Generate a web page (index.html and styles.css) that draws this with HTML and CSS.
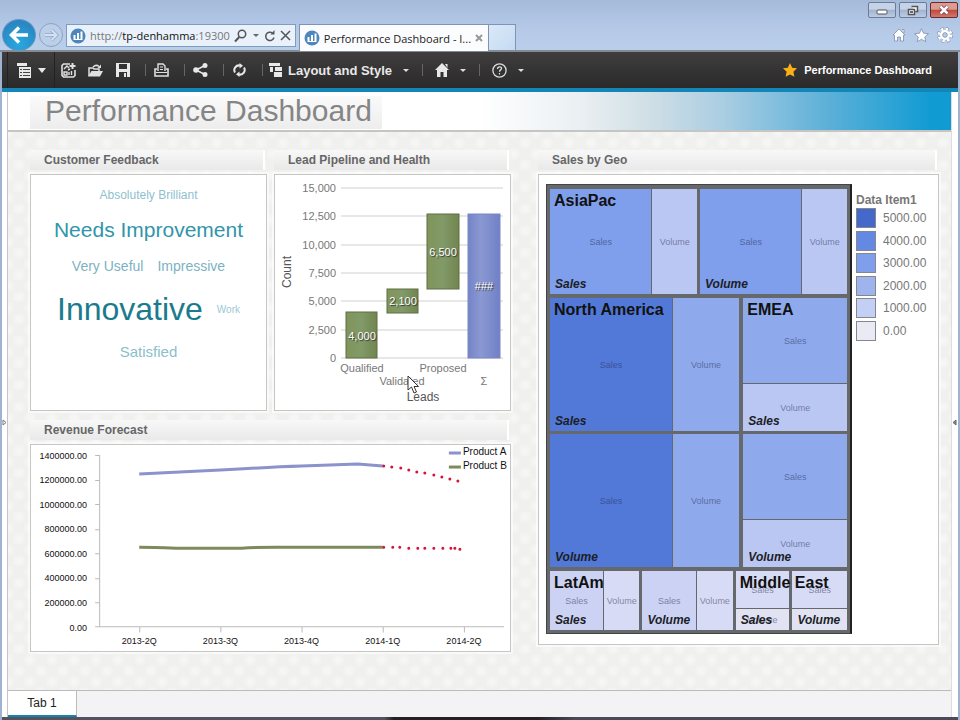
FILE: index.html
```html
<!DOCTYPE html>
<html lang="en">
<head>
    <meta charset="UTF-8">
    <meta name="viewport" content="width=device-width, initial-scale=1.0">
    <title>Performance Dashboard</title>
    <link rel="stylesheet" href="styles.css">
</head>
<body>
    <!-- Browser frame -->
    <header class="browser">
        <div class="window-buttons">
            <button class="win-btn" aria-label="Minimize"><svg width="12" height="10"><rect x="1" y="5" width="10" height="4" rx="1" fill="#fff" stroke="#555"/></svg></button>
            <button class="win-btn" aria-label="Restore"><svg width="12" height="11"><path d="M4.500 1.500h6v5h-2M1.500 4.500h6v5h-6z" fill="#fff" stroke="#555" stroke-width="1.500"/><rect x="3" y="6" width="3" height="2" fill="#667"/></svg></button>
            <button class="win-btn close" aria-label="Close"><svg width="12" height="10"><path d="M2.500 1.500l7 7M9.500 1.500l-7 7" stroke="#734" stroke-width="4"/><path d="M2.500 1.500l7 7M9.500 1.500l-7 7" stroke="#fff" stroke-width="2.500"/></svg></button>
        </div>
        <div class="nav">
            <button class="back" aria-label="Back"><svg width="20" height="18" viewBox="0 0 20 18"><path d="M19 9H3M10 1.500L2.500 9l7.500 7.500" fill="none" stroke="#fff" stroke-width="3.500"/></svg></button>
            <button class="forward" aria-label="Forward"><svg width="15" height="14" viewBox="0 0 15 14"><path d="M1 7h11M7.500 2l5 5-5 5" fill="none" stroke="#8fa8c6" stroke-width="3.500"/><path d="M1 7h11M7.500 2l5 5-5 5" fill="none" stroke="#d3e1f3" stroke-width="2"/></svg></button>
            <div class="address">
                <svg width="16" height="16" viewBox="0 0 16 16"><circle cx="8" cy="8" r="7.500" fill="#4c86bb"/><path d="M4.500 7v5M8 5v7M11.500 3.500V12" stroke="#fff" stroke-width="2"/><path d="M4 11.500h8" stroke="#fff"/></svg>
                <span class="url">http://<b>tp-denhamma</b>:19300</span>
                <button class="plain" aria-label="Search"><svg width="14" height="14" viewBox="0 0 14 14"><circle cx="8" cy="5" r="3.700" fill="none" stroke="#555" stroke-width="1.500"/><path d="M5.300 8L1 12.500" stroke="#555" stroke-width="2"/></svg></button>
                <button class="plain" aria-label="Show addresses"><svg width="8" height="5"><path d="M1 1h6L4 4z" fill="#666"/></svg></button>
                <button class="plain" aria-label="Refresh"><svg width="12" height="12" viewBox="0 0 12 12"><path d="M10 7.500A4.200 4.200 0 1 1 8.500 3" fill="none" stroke="#555" stroke-width="1.500"/><path d="M6.500 4.500h4V0z" fill="#555"/></svg></button>
                <button class="plain" aria-label="Stop"><svg width="11" height="11"><path d="M1 1l9 9M10 1l-9 9" stroke="#555" stroke-width="1.500"/></svg></button>
            </div>
            <div class="page-tab">
                <svg width="16" height="16" viewBox="0 0 16 16"><circle cx="8" cy="8" r="7.500" fill="#4c86bb"/><path d="M4.500 7v5M8 5v7M11.500 3.500V12" stroke="#fff" stroke-width="2"/><path d="M4 11.500h8" stroke="#fff"/></svg>
                <span class="page-name">Performance Dashboard - I...</span>
                <button class="plain" aria-label="Close tab"><svg width="8" height="8"><path d="M1 1l6 6M7 1L1 7" stroke="#999" stroke-width="2"/></svg></button>
            </div>
            <button class="new-tab" aria-label="New tab"></button>
            <div class="browser-tools">
                <button class="plain" aria-label="Home"><svg width="14" height="14" viewBox="0 0 14 14"><path d="M7 1l6 6h-1.500v6H8.500V9h-3v4H2.500V7H1zM10 1.500h2V5" fill="#fff" stroke="#7d8ea8" stroke-width=".8"/></svg></button>
                <button class="plain" aria-label="Favorites"><svg width="15" height="14" viewBox="0 0 15 14"><path d="M7.500.7l2 4.500 4.900.5-3.700 3.300 1.100 4.700-4.300-2.400-4.300 2.400 1.100-4.700L.6 5.700l4.900-.5z" fill="#fff" stroke="#7d8ea8" stroke-width=".8"/></svg></button>
                <button class="plain" aria-label="Tools"><svg width="16" height="16" viewBox="0 0 16 16"><circle cx="8" cy="8" r="6" fill="none" stroke="#7d8ea8" stroke-width="4" stroke-dasharray="2.800 1.900"/><circle cx="8" cy="8" r="6" fill="none" stroke="#fff" stroke-width="2.800" stroke-dasharray="2.400 2.300"/><circle cx="8" cy="8" r="3.700" fill="none" stroke="#fff" stroke-width="2.500"/><circle cx="8" cy="8" r="2.300" fill="none" stroke="#7d8ea8" stroke-width=".8"/></svg></button>
            </div>
        </div>
    </header>

    <div class="app">
        <!-- Toolbar -->
        <div class="toolbar">
            <button class="tool menu" aria-label="Menu">
                <svg width="16" height="15" viewBox="0 0 16 15"><path d="M1 0h10v3H1zM3 4h12v11H3z" fill="#e8e8e8"/><path d="M4 6.500h2M7 6.500h7M4 9.500h2M7 9.500h7M4 12.500h2M7 12.500h7" stroke="#444"/></svg>
                <svg width="8" height="5"><path d="M0 0h8L4 5z" fill="#e8e8e8"/></svg>
            </button>
            <button class="tool" aria-label="New"><svg width="15" height="15" viewBox="0 0 15 15"><path d="M9 1H2.500L1 2.500v10L2.500 14h10l1.500-1.500V7" fill="none" stroke="#e0e0e0" stroke-width="1.600"/><path d="M3 6l3-3 2 2M3 9h3v3H3zM8 12V9M10.500 12V8M7 7l2-1" fill="none" stroke="#e0e0e0" stroke-width="1.400"/><path d="M11.500 0v6M8.500 3h6" stroke="#e0e0e0" stroke-width="2"/></svg></button>
            <button class="tool" aria-label="Open"><svg width="15" height="13" viewBox="0 0 15 13"><path d="M1 12V4h4l1 1h5v2" fill="none" stroke="#e0e0e0" stroke-width="1.500"/><path d="M0 12.500L3.500 7H15l-3 5.500z" fill="#e0e0e0"/><path d="M5 3q3-3 6-.5" fill="none" stroke="#e0e0e0" stroke-width="1.500"/><path d="M9.500 4H13V.5z" fill="#e0e0e0"/></svg></button>
            <button class="tool" aria-label="Save"><svg width="14" height="14" viewBox="0 0 14 14"><path d="M0 0h14v14H0z" fill="#e8e8e8"/><path d="M3 1h8v5H3zM3 9h8v5H3z" fill="#333"/><path d="M8 10h2v4H8z" fill="#e8e8e8"/></svg></button>
            <span class="sep"></span>
            <button class="tool" aria-label="Print"><svg width="15" height="14" viewBox="0 0 15 14"><path d="M4 8V1h5l2 2v5" fill="none" stroke="#e0e0e0" stroke-width="1.400"/><path d="M3 6H1v7h13V6h-2" fill="none" stroke="#e0e0e0" stroke-width="1.600"/><path d="M2 9.500h11M6 4h3M6 6.500h3" stroke="#e0e0e0"/></svg></button>
            <span class="sep"></span>
            <button class="tool" aria-label="Share"><svg width="15" height="14" viewBox="0 0 15 14"><path d="M12 2.500L3 7l9 4.500" fill="none" stroke="#e8e8e8" stroke-width="1.600"/><circle cx="12" cy="2.500" r="2.500" fill="#e8e8e8"/><circle cx="3" cy="7" r="2.800" fill="#e8e8e8"/><circle cx="12" cy="11.500" r="2.500" fill="#e8e8e8"/></svg></button>
            <span class="sep"></span>
            <button class="tool" aria-label="Refresh"><svg width="13" height="14" viewBox="0 0 13 14"><path d="M2 9.500A4.700 4.700 0 0 1 7 2.500M11 4.500a4.700 4.700 0 0 1-5 7" fill="none" stroke="#e8e8e8" stroke-width="2"/><path d="M6.500 0v5.500L10 2.700zM6.500 14V8.500L3 11.300z" fill="#e8e8e8"/></svg></button>
            <span class="sep"></span>
            <button class="tool layout">
                <svg width="14" height="14" viewBox="0 0 14 14"><path d="M0 0h11v3H0zM1 4h3v5H1zM6 4h7v4H6zM5 9h8v5H5z" fill="#e8e8e8"/><path d="M4 4.500h2M5 8.500h6" stroke="#333"/></svg>
                Layout and Style
                <svg class="caret" width="6" height="3"><path d="M0 0h6L3 3z" fill="#ddd"/></svg>
            </button>
            <span class="sep"></span>
            <button class="tool drop" aria-label="Home">
                <svg width="14" height="14" viewBox="0 0 14 14"><path d="M7 0l7 7h-2v7H8.500V9h-3v5H2V7H0zM10 1h2.500v4z" fill="#e8e8e8"/></svg>
                <svg class="caret" width="6" height="3"><path d="M0 0h6L3 3z" fill="#ddd"/></svg>
            </button>
            <span class="sep"></span>
            <button class="tool drop" aria-label="Help">
                <svg width="15" height="15" viewBox="0 0 15 15"><circle cx="7.500" cy="7.500" r="6.600" fill="none" stroke="#ddd" stroke-width="1.300"/><path d="M5.500 6c0-3 4.300-2.700 4-.3-.2 1.300-2 1.200-2 3M7.500 10v1.500" fill="none" stroke="#ddd" stroke-width="1.300"/></svg>
                <svg class="caret" width="6" height="3"><path d="M0 0h6L3 3z" fill="#ddd"/></svg>
            </button>
            <div class="report-name">
                <svg width="14" height="14" viewBox="0 0 14 14"><path d="M7 0l2.200 4.700 4.800.6-3.600 3.400 1 5.100L7 11.400l-4.400 2.400 1-5.100L0 5.300l4.800-.6z" fill="#fbb017"/></svg>
                <span>Performance Dashboard</span>
            </div>
        </div>

        <div class="workspace">
            <button class="gutter" aria-label="Show left pane"><svg width="5" height="7"><path d="M1 1l3 2.500L1 6z" fill="#fff" stroke="#777"/></svg></button>
            <main class="report">
                <div class="banner"><h1>Performance Dashboard</h1></div>
                <div class="dashboard">
                    <div class="left">
                        <section class="panel">
                            <h2>Customer Feedback</h2>
                            <div class="box cloud">
                                <p class="line-1"><span class="s12">Absolutely Brilliant</span></p>
                                <p class="line-2"><span class="s21">Needs Improvement</span></p>
                                <p class="line-3"><span class="s14">Very Useful</span><span class="s14">Impressive</span></p>
                                <p class="line-4"><span class="s32">Innovative</span><span class="s10">Work</span></p>
                                <p class="line-5"><span class="s15">Satisfied</span></p>
                            </div>
                        </section>

                        <section class="panel">
                            <h2>Lead Pipeline and Health</h2>
                            <div class="box pipeline">
                                <svg class="chart" viewBox="0 0 235 235">
                                    <defs>
                                        <linearGradient id="green"><stop offset="0" stop-color="#81955a"/><stop offset=".5" stop-color="#819a68"/><stop offset="1" stop-color="#71854f"/></linearGradient>
                                        <linearGradient id="blue"><stop offset="0" stop-color="#7483c6"/><stop offset=".4" stop-color="#8a99d2"/><stop offset="1" stop-color="#7180c6"/></linearGradient>
                                    </defs>
                                    <path class="grid" d="M66 13h162M66 41h162M66 70h162M66 98h162M66 126h162M66 155h162M66 183h162"/>
                                    <g class="values">
                                        <text x="61" y="17">15,000</text>
                                        <text x="61" y="45">12,500</text>
                                        <text x="61" y="74">10,000</text>
                                        <text x="61" y="102">7,500</text>
                                        <text x="61" y="130">5,000</text>
                                        <text x="61" y="159">2,500</text>
                                        <text x="61" y="187">0</text>
                                    </g>
                                    <g class="bars">
                                        <rect x="71" y="137" width="31" height="46"/>
                                        <rect x="112" y="114" width="31" height="24"/>
                                        <rect x="152" y="39" width="32" height="75"/>
                                        <rect class="total" x="193" y="39" width="32" height="144"/>
                                    </g>
                                    <g class="bar-labels">
                                        <text x="87" y="165">4,000</text>
                                        <text x="128" y="130">2,100</text>
                                        <text x="168" y="81">6,500</text>
                                        <text x="209" y="115">###</text>
                                    </g>
                                    <g class="categories">
                                        <text x="87" y="197">Qualified</text>
                                        <text x="127" y="210">Validated</text>
                                        <text x="168" y="197">Proposed</text>
                                        <text x="209" y="210">Σ</text>
                                        <text class="axis-title" x="148" y="226">Leads</text>
                                        <text class="axis-title" transform="translate(16 97) rotate(-90)">Count</text>
                                    </g>
                                </svg>
                                <svg class="cursor" width="12" height="20" viewBox="0 0 12 20"><path d="M1 1v14l3.500-3 2.500 6 2.500-1L7 11.500h4.500z" fill="#fff" stroke="#333"/></svg>
                            </div>
                        </section>

                        <section class="panel revenue">
                            <h2>Revenue Forecast</h2>
                            <div class="box">
                                <svg class="chart" viewBox="0 0 478 206">
                                    <path class="axis" d="M68.500 10v171.500H472M64 10.500h4M64 35.500h4M64 59.500h4M64 84.500h4M64 108.500h4M64 133.500h4M64 157.500h4M64 181.500h4M108.500 182v5M189.500 182v5M270.500 182v5M351.500 182v5M432.500 182v5"/>
                                    <g class="amounts">
                                        <text x="56" y="14">1400000.00</text>
                                        <text x="56" y="38">1200000.00</text>
                                        <text x="56" y="63">1000000.00</text>
                                        <text x="56" y="87">800000.00</text>
                                        <text x="56" y="112">600000.00</text>
                                        <text x="56" y="136">400000.00</text>
                                        <text x="56" y="161">200000.00</text>
                                        <text x="56" y="186">0.00</text>
                                    </g>
                                    <g class="quarters">
                                        <text x="108" y="199">2013-2Q</text>
                                        <text x="189" y="199">2013-3Q</text>
                                        <text x="270" y="199">2013-4Q</text>
                                        <text x="351" y="199">2014-1Q</text>
                                        <text x="432" y="199">2014-2Q</text>
                                    </g>
                                    <path class="series-a" d="M108 29Q150 27 189 25 240 22 270 21T326 19L351 21"/>
                                    <path class="series-b" d="M108 102Q120 102 145 103H210Q225 102 245 102H351"/>
                                    <path class="forecast" d="M352 21h0M360 22h0M369 23h0M377 25h0M385 27h0M393 28h0M402 30h0M410 32h0M418 34h0M426 36h0M352 102h0M361 102h0M368 102h0M377 103h0M386 103h0M393 103h0M402 103h0M411 103h0M419 103h0M423 103h0M428 104h0"/>
                                    <path class="series-a" d="M417 8h12"/>
                                    <path class="series-b" d="M417 22h12"/>
                                    <text class="series-name" x="431" y="10">Product A</text>
                                    <text class="series-name" x="431" y="24">Product B</text>
                                </svg>
                            </div>
                        </section>
                    </div>

                    <section class="panel geo">
                        <h2>Sales by Geo</h2>
                        <div class="box geo-box">
                            <div class="treemap">
                                <div class="asia">
                                    <div class="node">
                                        <div class="cell c3">Sales</div><div class="cell c1">Volume</div>
                                        <h3>AsiaPac</h3><em>Sales</em>
                                    </div>
                                    <div class="node">
                                        <div class="cell c3">Sales</div><div class="cell c1">Volume</div>
                                        <em>Volume</em>
                                    </div>
                                </div>
                                <div class="middle">
                                    <div class="node america">
                                        <div class="cell c4">Sales</div><div class="cell c2">Volume</div>
                                        <h3>North America</h3><em>Sales</em>
                                    </div>
                                    <div class="node stacked">
                                        <div class="cell c2">Sales</div><div class="cell c1">Volume</div>
                                        <h3>EMEA</h3><em>Sales</em>
                                    </div>
                                    <div class="node america">
                                        <div class="cell c4">Sales</div><div class="cell c2">Volume</div>
                                        <em>Volume</em>
                                    </div>
                                    <div class="node stacked">
                                        <div class="cell c2">Sales</div><div class="cell c1">Volume</div>
                                        <em>Volume</em>
                                    </div>
                                </div>
                                <div class="small">
                                    <div class="node latam">
                                        <div class="cell c05">Sales</div><div class="cell c0">Volume</div>
                                        <h3>LatAm</h3><em>Sales</em>
                                    </div>
                                    <div class="node latam">
                                        <div class="cell c05">Sales</div><div class="cell c0">Volume</div>
                                        <em>Volume</em>
                                    </div>
                                    <div class="node stacked">
                                        <div class="cell c0">Sales</div><div class="cell c00">Volume</div>
                                        <h3>Middle East</h3><em>Sales</em>
                                    </div>
                                    <div class="node stacked">
                                        <div class="cell c0">Sales</div><div class="cell c00"></div>
                                        <em>Volume</em>
                                    </div>
                                </div>
                            </div>
                            <div class="legend">
                                <h4>Data Item1</h4>
                                <ul>
                                    <li><i class="k5"></i>5000.00</li>
                                    <li><i class="k4"></i>4000.00</li>
                                    <li><i class="k3"></i>3000.00</li>
                                    <li><i class="k2"></i>2000.00</li>
                                    <li><i class="k1"></i>1000.00</li>
                                    <li><i class="k0"></i>0.00</li>
                                </ul>
                            </div>
                        </div>
                    </section>
                </div>
                <nav class="tabs"><button class="tab">Tab 1</button></nav>
            </main>
            <button class="gutter right" aria-label="Show right pane"><svg width="5" height="7"><path d="M4 1L1 3.500 4 6z" fill="#888" stroke="#667"/></svg></button>
        </div>
    </div>
</body>
</html>
```

FILE: styles.css
```css
* {
    box-sizing: border-box;
}

body {
    font-family: "Liberation Sans", Arial, sans-serif;
    font-size: 12px;
    margin: 0;
    min-height: 100vh;
    display: flex;
    flex-direction: column;
    background: #9fb3d0;
}

h1, h2, h3, h4, p, ul {
    margin: 0;
    padding: 0;
}

button {
    font-family: inherit;
    padding: 0;
    margin: 0;
    border: none;
    background: none;
    cursor: pointer;
}

svg {
    display: block;
    flex: none;
}

/* browser frame */
.browser {
    height: 52px;
    background: linear-gradient(#a5b9d9, #b6cae8 60%, #b9cfea);
    border-bottom: 2px solid #858b93;
}

.window-buttons {
    height: 19px;
    display: flex;
    justify-content: flex-end;
    gap: 3px;
    padding: 2px 2px 0 0;
}

.win-btn {
    width: 28px;
    height: 16px;
    display: flex;
    align-items: center;
    justify-content: center;
    border: 1px solid #6c7c98;
    border-radius: 2px;
    background: linear-gradient(#c5d3e9 45%, #a1b3d0 50%, #bccbe2);
}

.win-btn.close {
    border-color: #6b2b2c;
    background: linear-gradient(#dd9c92 45%, #c0483b 50%, #d0796b);
}

.nav {
    display: flex;
    align-items: flex-start;
    height: 31px;
}

.back {
    width: 34px;
    height: 32px;
    margin-left: 2px;
    border-radius: 50%;
    border: 1px solid #6197c3;
    background: radial-gradient(circle at 50% 80%, #27a9e0, #2b86c2 75%);
    display: flex;
    align-items: center;
    justify-content: center;
}

.forward {
    width: 24px;
    height: 24px;
    margin: 4px 3px 0;
    border-radius: 50%;
    border: 1px solid #8ca2c2;
    background: #bccfe8;
    display: flex;
    align-items: center;
    justify-content: center;
}

.address {
    flex: 0 0 227px;
    height: 23px;
    margin-top: 5px;
    padding: 0 4px 0 3px;
    display: flex;
    align-items: center;
    gap: 4px;
    border: 1px solid #7f9cc0;
    background: #e9f1fb;
}

.url {
    flex: 1;
    min-width: 0;
    font-family: "Open Sans", sans-serif;
    font-size: 11px;
    color: #777;
    white-space: nowrap;
}

.url b {
    font-weight: normal;
    color: #111;
}

.page-tab {
    flex: 0 0 187px;
    height: 27px;
    margin: 5px 0 0 3px;
    padding: 0 5px 0 4px;
    display: flex;
    align-items: center;
    gap: 4px;
    border: 1px solid #7f94b4;
    border-bottom: none;
    background: #fbfcfe;
}

.page-name {
    flex: 1;
    min-width: 0;
    font-family: "Open Sans", sans-serif;
    font-size: 11px;
    color: #222;
    white-space: nowrap;
}

.new-tab {
    width: 27px;
    height: 26px;
    margin-top: 5px;
    border: 1px solid #7f94b4;
    border-width: 1px 1px 0 0;
    background: linear-gradient(135deg, #dbe9f8, #c4daf2);
}

.browser-tools {
    margin-left: auto;
    padding: 8px 7px 0 0;
    display: flex;
    gap: 8px;
    align-items: center;
}

/* application */
.app {
    flex: 1;
    display: flex;
    flex-direction: column;
    margin: 0 2px;
    padding-bottom: 3px;
    background: linear-gradient(to right, #55515e 40%, #242026 41%, #242026 56%, #4d4a57 60%);
}

.toolbar {
    height: 40px;
    display: flex;
    align-items: center;
    padding: 0 26px 0 5px;
    background: linear-gradient(#3f3d3d, #2b2a2a);
    border-bottom: 4px solid #1385b6;
}

.tool {
    width: 27px;
    height: 36px;
    display: flex;
    align-items: center;
    justify-content: center;
    color: #e8e8e8;
    font-weight: bold;
    font-size: 13px;
}

.tool.menu {
    width: 48px;
    gap: 6px;
    border: 1px solid #222;
    border-width: 0 1px;
}

.tool.layout {
    width: auto;
    gap: 5px;
    padding: 0 4px;
}

.tool.drop {
    width: auto;
    gap: 5px;
    padding: 0 4px 0 10px;
}

.caret {
    margin-left: 6px;
}

.sep {
    width: 12px;
    height: 12px;
    border-right: 1px solid #666;
    margin-right: 2px;
    margin-left: -2px;
}

.report-name {
    margin-left: auto;
    display: flex;
    align-items: center;
    gap: 7px;
    color: #fff;
    font-size: 11px;
    font-weight: bold;
}

.workspace {
    flex: 1;
    display: flex;
    background: #fff;
}

.gutter {
    width: 6px;
    display: flex;
    align-items: center;
    border-right: 1px solid #c4c4c4;
    padding-top: 36px;
}

.gutter.right {
    width: 7px;
    border-right: none;
    border-left: 1px solid #ddd;
}

.report {
    flex: 1;
    min-width: 0;
    display: flex;
    flex-direction: column;
}

.banner {
    height: 40px;
    padding: 4px 0 0 22px;
    border-bottom: 2px solid #c5c5c3;
    background: linear-gradient(to right, #fff 50%, #e9eff2 61%, #d0dfe6 68%, #a9cde2 76%, #5cb0d8 87%, #109bd3 98%);
}

.banner h1 {
    display: inline-block;
    height: 33px;
    padding: 0 10px 0 15px;
    font-size: 30px;
    line-height: 30px;
    font-weight: normal;
    color: #858585;
    background: linear-gradient(#fafafa, #ededed);
}

.dashboard {
    flex: 1;
    display: grid;
    grid-template-columns: 481fr 401fr;
    gap: 27px;
    align-items: start;
    padding: 18px 12px 18px 22px;
    background-color: #f0f0ee;
    background-image:
        radial-gradient(circle, #f6f6f5 2px, transparent 7px),
        radial-gradient(circle, #f6f6f5 2px, transparent 7px);
    background-size: 22px 22px;
    background-position: 0 0, 11px 11px;
}

.left {
    display: grid;
    grid-template-columns: 1fr 1fr;
    gap: 9px 7px;
}

.revenue {
    grid-column: 1 / 3;
}

.panel h2 {
    height: 20px;
    padding-left: 14px;
    margin-right: 2px;
    font-size: 12px;
    line-height: 20px;
    color: #666;
    white-space: nowrap;
    background: linear-gradient(#f8f8f8, #e9e9e9);
    border-right: 2px solid #fff;
}

.box {
    margin-top: 4px;
    border: 1px solid #c6c6c6;
    background: #fff;
    outline: 2px solid rgba(255, 255, 255, 0.6);
}

.chart {
    width: 100%;
    height: auto;
}

/* word cloud */
.cloud {
    min-height: 237px;
    text-align: center;
    white-space: nowrap;
}

.cloud p {
    display: flex;
    align-items: center;
    justify-content: center;
    gap: 14px;
}

.cloud .line-1 {
    height: 40px;
}

.cloud .line-2 {
    height: 30px;
}

.cloud .line-3 {
    height: 42px;
}

.cloud .line-4 {
    height: 44px;
}

.cloud .line-5 {
    height: 40px;
}

.s10 {
    font-size: 10px;
    color: #9cc7d8;
}

.s12 {
    font-size: 12px;
    color: #90bfcf;
}

.s14 {
    font-size: 14px;
    color: #7db2c3;
}

.s15 {
    font-size: 15px;
    color: #8bbfcb;
}

.s21 {
    font-size: 21px;
    color: #3195ab;
}

.s32 {
    font-size: 32px;
    color: #1b7b8e;
}

/* lead pipeline */
.pipeline {
    position: relative;
}

.grid {
    stroke: #cfcfcf;
    stroke-width: 1;
    fill: none;
}

.values, .categories, .bar-labels {
    font-size: 11px;
    fill: #777;
}

.values, .amounts {
    text-anchor: end;
}

.categories, .bar-labels, .quarters {
    text-anchor: middle;
}

.axis-title {
    font-size: 12px;
    fill: #555;
}

.bars rect {
    fill: url(#green);
    stroke: #5f6e45;
}

.bars .total {
    fill: url(#blue);
    stroke: #7b88c4;
}

.bar-labels {
    fill: #fff;
    text-shadow: 1px 1px 1px #333;
}

.cursor {
    position: absolute;
    left: 56%;
    top: 85%;
}

/* revenue forecast */
.axis {
    fill: none;
    stroke: #bbb;
}

.amounts, .quarters {
    font-size: 9px;
    fill: #111;
}

.series-name {
    font-size: 10px;
    fill: #111;
}

.series-a, .series-b {
    fill: none;
    stroke: #8b92cc;
    stroke-width: 3;
}

.series-b {
    stroke: #7f8a5c;
}

.forecast {
    stroke: #d4143c;
    stroke-width: 3;
    stroke-linecap: round;
}

/* sales by geo */
.geo-box {
    display: flex;
    align-items: flex-start;
    padding: 9px 8px 10px 7px;
    gap: 4px;
}

.treemap {
    flex: 1;
    display: flex;
    flex-direction: column;
    gap: 4px;
    padding: 4px 3px 3px;
    border: 1px solid #444;
    border-right: 2px solid #222;
    background: #66696b;
}

.asia {
    display: grid;
    grid-template-columns: 1fr 1fr;
    grid-template-rows: 105px;
    gap: 3px;
}

.middle {
    display: grid;
    grid-template-columns: 190fr 104fr;
    grid-template-rows: 133px 133px;
    gap: 3px 4px;
}

.small {
    display: grid;
    grid-template-columns: 90fr 91fr 54fr 55fr;
    grid-template-rows: 59px;
    gap: 3px;
}

.node {
    position: relative;
    display: grid;
    grid-template-columns: 102fr 45fr;
    gap: 1px;
}

.america {
    grid-template-columns: 123fr 67fr;
}

.latam {
    grid-template-columns: 54fr 36fr;
}

.stacked {
    grid-template-columns: 1fr;
    grid-template-rows: 85fr 47fr;
}

.cell {
    display: flex;
    align-items: center;
    justify-content: center;
    min-width: 0;
    font-size: 9px;
    color: rgba(30, 40, 80, 0.5);
}

.node h3 {
    position: absolute;
    left: 4px;
    top: 3px;
    font-size: 16px;
    line-height: 18px;
    white-space: nowrap;
    color: #111;
    z-index: 1;
}

.node em {
    position: absolute;
    left: 5px;
    bottom: 3px;
    font-size: 12px;
    line-height: 14px;
    font-weight: bold;
    color: #1c1e26;
}

.c4 {
    background: #5279d8;
}

.c3 {
    background: #7f9eeb;
}

.c2 {
    background: #8eaaec;
}

.c1 {
    background: #bbc7f3;
}

.c05 {
    background: #ccd2f3;
}

.c0 {
    background: #d7dbf5;
}

.c00 {
    background: #e1e3f3;
}

.legend {
    flex: none;
    width: 74px;
    padding-top: 8px;
    color: #777;
}

.legend h4 {
    font-size: 12px;
    line-height: 16px;
    color: #777;
    white-space: nowrap;
}

.legend ul {
    list-style: none;
    display: flex;
    flex-direction: column;
    justify-content: space-between;
    height: 133px;
}

.legend li {
    display: flex;
    align-items: center;
    gap: 7px;
}

.legend i {
    width: 20px;
    height: 20px;
    border: 1px solid #85878f;
}

.k5 {
    background: #4469cb;
}

.k4 {
    background: #6489e3;
}

.k3 {
    background: #7f9eec;
}

.k2 {
    background: #9fb3ed;
}

.k1 {
    background: #c3cff4;
}

.k0 {
    background: #e9eaf3;
}

/* bottom tabs */
.tabs {
    height: 27px;
    background: #f3f3f5;
    border-top: 1px solid #bbb;
}

.tab {
    height: 26px;
    width: 69px;
    background: #fff;
    border-right: 1px solid #bbb;
    border-bottom: 2px solid #1385a8;
    font-size: 12px;
    color: #222;
}
```
